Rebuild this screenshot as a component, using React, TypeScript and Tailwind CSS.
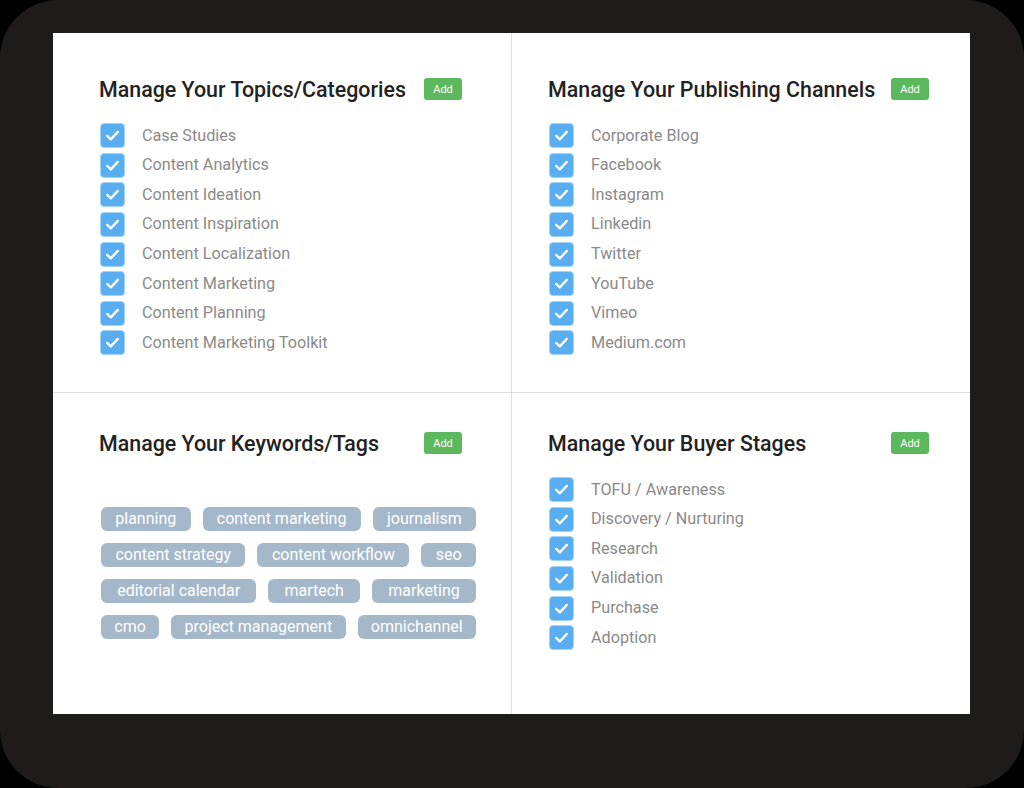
import React from "react";

const font = { fontFamily: "Roboto, 'Noto Sans', sans-serif" };

function Check({ label }: { label: string }) {
  return (
    <div className="flex items-center h-[29.6px]">
      <div className="w-[25px] h-[25px] rounded-[4px] bg-[#58aef0] border border-[#a4d3f8] flex items-center justify-center shrink-0">
        <svg width="17" height="17" viewBox="0 0 16 16" fill="none">
          <path d="M3 8.4 L6.4 11.6 L13 4.6" stroke="white" strokeWidth="2.2" strokeLinecap="round" strokeLinejoin="round" />
        </svg>
      </div>
      <span className="ml-[17px] text-[16.2px] text-[#8a8a8a] leading-none">{label}</span>
    </div>
  );
}

function Header({ title }: { title: string }) {
  return (
    <div className="flex items-center justify-between h-[24px]">
      <h2 className="text-[21.4px] font-medium text-[#222] leading-none pt-[2px]">{title}</h2>
      <button className="w-[38px] h-[22px] rounded-[3px] bg-[#5cb85c] text-white text-[11px] leading-none flex items-center justify-center">
        Add
      </button>
    </div>
  );
}

function Tag({ t }: { t: string }) {
  return (
    <span className="grow whitespace-nowrap h-[24px] px-[12px] rounded-[6px] bg-[#a4b8ca] text-white text-[16px] leading-none flex items-center justify-center">
      {t}
    </span>
  );
}

const topics = [
  "Case Studies",
  "Content Analytics",
  "Content Ideation",
  "Content Inspiration",
  "Content Localization",
  "Content Marketing",
  "Content Planning",
  "Content Marketing Toolkit",
];
const channels = ["Corporate Blog", "Facebook", "Instagram", "Linkedin", "Twitter", "YouTube", "Vimeo", "Medium.com"];
const stages = ["TOFU / Awareness", "Discovery / Nurturing", "Research", "Validation", "Purchase", "Adoption"];
const tagRows = [
  ["planning", "content marketing", "journalism"],
  ["content strategy", "content workflow", "seo"],
  ["editorial calendar", "martech", "marketing"],
  ["cmo", "project management", "omnichannel"],
];

export default function App() {
  return (
    <div className="w-[1024px] h-[788px] bg-black" style={font}>
      <div className="w-full h-full rounded-[58px] bg-[#1f1b1b] pt-[33px] pl-[53px]">
        <div className="w-[917px] h-[681px] bg-white grid grid-cols-[459px_458px] grid-rows-[360px_321px]">
          <div className="border-r border-b border-[#dedede] pl-[46px] pt-[44px]">
            <div className="w-[363px]">
              <Header title="Manage Your Topics/Categories" />
            </div>
            <div className="mt-[20px] ml-[1px]">
              {topics.map((t) => (
                <Check key={t} label={t} />
              ))}
            </div>
          </div>
          <div className="border-b border-[#dedede] pl-[36px] pt-[44px]">
            <div className="w-[381px]">
              <Header title="Manage Your Publishing Channels" />
            </div>
            <div className="mt-[20px] ml-[1px]">
              {channels.map((t) => (
                <Check key={t} label={t} />
              ))}
            </div>
          </div>
          <div className="border-r border-[#dedede] pl-[46px] pt-[38px]">
            <div className="w-[363px]">
              <Header title="Manage Your Keywords/Tags" />
            </div>
            <div className="mt-[52px] w-[375px] ml-[2px] flex flex-col gap-[12px]">
              {tagRows.map((row, i) => (
                <div key={i} className="flex gap-[12px]">
                  {row.map((t) => (
                    <Tag key={t} t={t} />
                  ))}
                </div>
              ))}
            </div>
          </div>
          <div className="pl-[36px] pt-[38px]">
            <div className="w-[381px]">
              <Header title="Manage Your Buyer Stages" />
            </div>
            <div className="mt-[20px] ml-[1px]">
              {stages.map((t) => (
                <Check key={t} label={t} />
              ))}
            </div>
          </div>
        </div>
      </div>
    </div>
  );
}
